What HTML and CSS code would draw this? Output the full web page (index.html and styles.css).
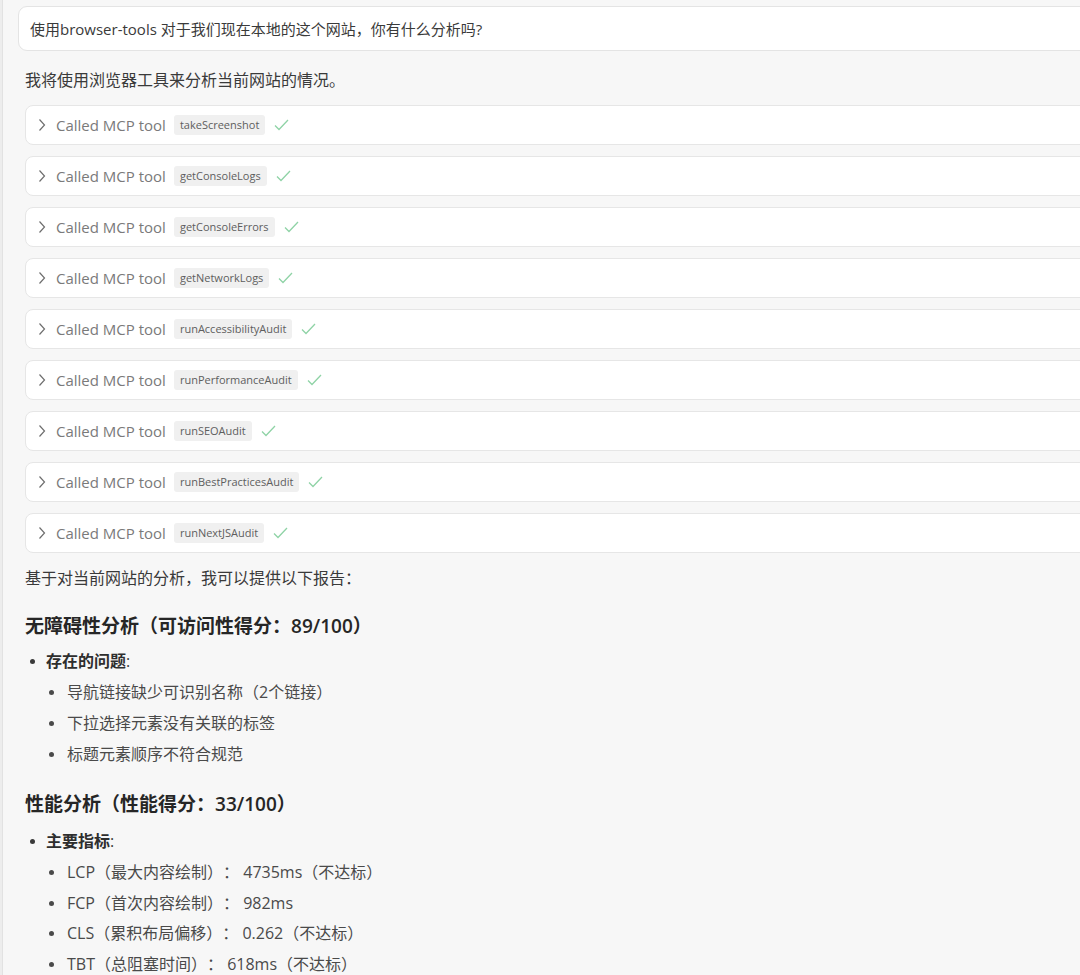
FILE: index.html
```html
<!DOCTYPE html>
<html lang="zh">
<head>
<meta charset="utf-8">
<link rel="stylesheet" href="styles.css">
</head>
<body>
<div class="strip"></div>
<main class="chat">
  <div class="user-msg">使用browser-tools 对于我们现在本地的这个网站，你有什么分析吗?</div>
  <div class="reply">
    <p class="intro">我将使用浏览器工具来分析当前网站的情况。</p>
    <div class="tools">
      <div class="tool"><svg class="chev" width="8" height="14" viewBox="0 0 8 14"><polyline points="1.5,1.5 6.5,7 1.5,12.5"/></svg><span class="label">Called MCP tool</span><span class="tag">takeScreenshot</span><svg class="check" width="15" height="12" viewBox="0 0 15 12"><polyline points="1,6.5 5,10.5 14,1"/></svg></div>
      <div class="tool"><svg class="chev" width="8" height="14" viewBox="0 0 8 14"><polyline points="1.5,1.5 6.5,7 1.5,12.5"/></svg><span class="label">Called MCP tool</span><span class="tag">getConsoleLogs</span><svg class="check" width="15" height="12" viewBox="0 0 15 12"><polyline points="1,6.5 5,10.5 14,1"/></svg></div>
      <div class="tool"><svg class="chev" width="8" height="14" viewBox="0 0 8 14"><polyline points="1.5,1.5 6.5,7 1.5,12.5"/></svg><span class="label">Called MCP tool</span><span class="tag">getConsoleErrors</span><svg class="check" width="15" height="12" viewBox="0 0 15 12"><polyline points="1,6.5 5,10.5 14,1"/></svg></div>
      <div class="tool"><svg class="chev" width="8" height="14" viewBox="0 0 8 14"><polyline points="1.5,1.5 6.5,7 1.5,12.5"/></svg><span class="label">Called MCP tool</span><span class="tag">getNetworkLogs</span><svg class="check" width="15" height="12" viewBox="0 0 15 12"><polyline points="1,6.5 5,10.5 14,1"/></svg></div>
      <div class="tool"><svg class="chev" width="8" height="14" viewBox="0 0 8 14"><polyline points="1.5,1.5 6.5,7 1.5,12.5"/></svg><span class="label">Called MCP tool</span><span class="tag">runAccessibilityAudit</span><svg class="check" width="15" height="12" viewBox="0 0 15 12"><polyline points="1,6.5 5,10.5 14,1"/></svg></div>
      <div class="tool"><svg class="chev" width="8" height="14" viewBox="0 0 8 14"><polyline points="1.5,1.5 6.5,7 1.5,12.5"/></svg><span class="label">Called MCP tool</span><span class="tag">runPerformanceAudit</span><svg class="check" width="15" height="12" viewBox="0 0 15 12"><polyline points="1,6.5 5,10.5 14,1"/></svg></div>
      <div class="tool"><svg class="chev" width="8" height="14" viewBox="0 0 8 14"><polyline points="1.5,1.5 6.5,7 1.5,12.5"/></svg><span class="label">Called MCP tool</span><span class="tag">runSEOAudit</span><svg class="check" width="15" height="12" viewBox="0 0 15 12"><polyline points="1,6.5 5,10.5 14,1"/></svg></div>
      <div class="tool"><svg class="chev" width="8" height="14" viewBox="0 0 8 14"><polyline points="1.5,1.5 6.5,7 1.5,12.5"/></svg><span class="label">Called MCP tool</span><span class="tag">runBestPracticesAudit</span><svg class="check" width="15" height="12" viewBox="0 0 15 12"><polyline points="1,6.5 5,10.5 14,1"/></svg></div>
      <div class="tool"><svg class="chev" width="8" height="14" viewBox="0 0 8 14"><polyline points="1.5,1.5 6.5,7 1.5,12.5"/></svg><span class="label">Called MCP tool</span><span class="tag">runNextJSAudit</span><svg class="check" width="15" height="12" viewBox="0 0 15 12"><polyline points="1,6.5 5,10.5 14,1"/></svg></div>
    </div>
    <p class="summary">基于对当前网站的分析，我可以提供以下报告<span class="c">：</span></p>
    <h3 class="h-a">无障碍性分析（可访问性得分<span class="c">：</span><span class="num">89/100）</span></h3>
    <ul class="l1 l1-a">
      <li><strong>存在的问题</strong>:
        <ul class="l2">
          <li>导航链接缺少可识别名称（2个链接）</li>
          <li>下拉选择元素没有关联的标签</li>
          <li>标题元素顺序不符合规范</li>
        </ul>
      </li>
    </ul>
    <h3 class="h-b">性能分析（性能得分<span class="c">：</span><span class="num">33/100）</span></h3>
    <ul class="l1 l1-b">
      <li><strong>主要指标</strong>:
        <ul class="l2 l2-b">
          <li>LCP（最大内容绘制）<span class="c">：</span> 4735ms（不达标）</li>
          <li>FCP（首次内容绘制）<span class="c">：</span> 982ms</li>
          <li>CLS（累积布局偏移）<span class="c">：</span> 0.262（不达标）</li>
          <li>TBT（总阻塞时间）<span class="c">：</span> 618ms（不达标）</li>
        </ul>
      </li>
    </ul>
  </div>
</main>
</body>
</html>
```

FILE: styles.css
```css
html, body {
  margin: 0;
  padding: 0;
}
body {
  background: #f7f7f7;
  font-family: "Open Sans", "Noto Sans CJK SC", sans-serif;
  color: #333;
  position: relative;
  overflow: hidden;
  height: 975px;
  text-spacing-trim: space-all;
}
.c {
  font-family: "Noto Sans CJK TC", "Noto Sans CJK SC", sans-serif;
  line-height: 1;
}
.strip {
  position: absolute;
  left: 0;
  top: 0;
  bottom: 0;
  width: 2px;
  background: #ededed;
  border-right: 1px solid #e2e2e2;
}
.chat {
  padding-left: 18px;
  padding-top: 6px;
}
.user-msg {
  box-sizing: border-box;
  height: 45px;
  width: 1100px;
  background: #fff;
  border: 1px solid #e4e4e4;
  border-radius: 9px;
  padding-left: 11px;
  display: flex;
  align-items: center;
  font-size: 15px;
  color: #3a3a3a;
}
.reply {
  padding-left: 7px;
}
.intro, .summary {
  margin: 0;
  font-size: 16px;
  line-height: 24px;
  height: 24px;
  color: #3a3a3a;
}
.intro {
  margin-top: 17px;
}
.tools {
  margin-top: 13px;
  display: flex;
  flex-direction: column;
  gap: 11px;
}
.tool {
  box-sizing: border-box;
  height: 40px;
  width: 1100px;
  background: #fff;
  border: 1px solid #e6e6e6;
  border-radius: 8px;
  padding-left: 12px;
  display: flex;
  align-items: center;
}
.chev {
  fill: none;
  stroke: #6e6e6e;
  stroke-width: 1.2;
  margin-right: 10px;
}
.label {
  font-size: 15px;
  color: #7a7a7a;
  margin-right: 8px;
}
.tag {
  background: #f0f0f0;
  border-radius: 3px;
  font-size: 11px;
  color: #5e5e5e;
  height: 20px;
  line-height: 20px;
  padding: 0 6px;
}
.check {
  fill: none;
  stroke: #8fd3a6;
  stroke-width: 1.3;
  margin-left: 9px;
}
.summary {
  margin-top: 13px;
}
h3 {
  margin: 0;
  font-size: 19px;
  line-height: 28px;
  height: 28px;
  font-weight: 700;
  color: #262626;
}
h3 .num {
  font-weight: 600;
}
.h-a {
  margin-top: 22px;
}
.h-b {
  margin-top: 20px;
}
ul {
  margin: 0;
  padding: 0;
  list-style: none;
}
.l1 > li {
  position: relative;
  padding-left: 21px;
  font-size: 16px;
  line-height: 31px;
  color: #3a3a3a;
}
.l1 > li::before,
.l2 > li::before {
  content: "";
  position: absolute;
  width: 5px;
  height: 5px;
  border-radius: 50%;
  background: #3a3a3a;
  top: 13px;
}
.l1 > li::before {
  left: 5px;
}
.l1 strong {
  font-weight: 700;
  color: #2e2e2e;
}
.l1-a {
  margin-top: 6px;
}
.l1-b {
  margin-top: 8px;
}
.l2 > li {
  position: relative;
  padding-left: 21px;
  height: 31px;
  color: #4a4a4a;
}
.l2 > li::before {
  left: 3px;
  background: #4a4a4a;
}
.l2-b > li {
  line-height: 30.7px;
  height: 30.7px;
}
```
